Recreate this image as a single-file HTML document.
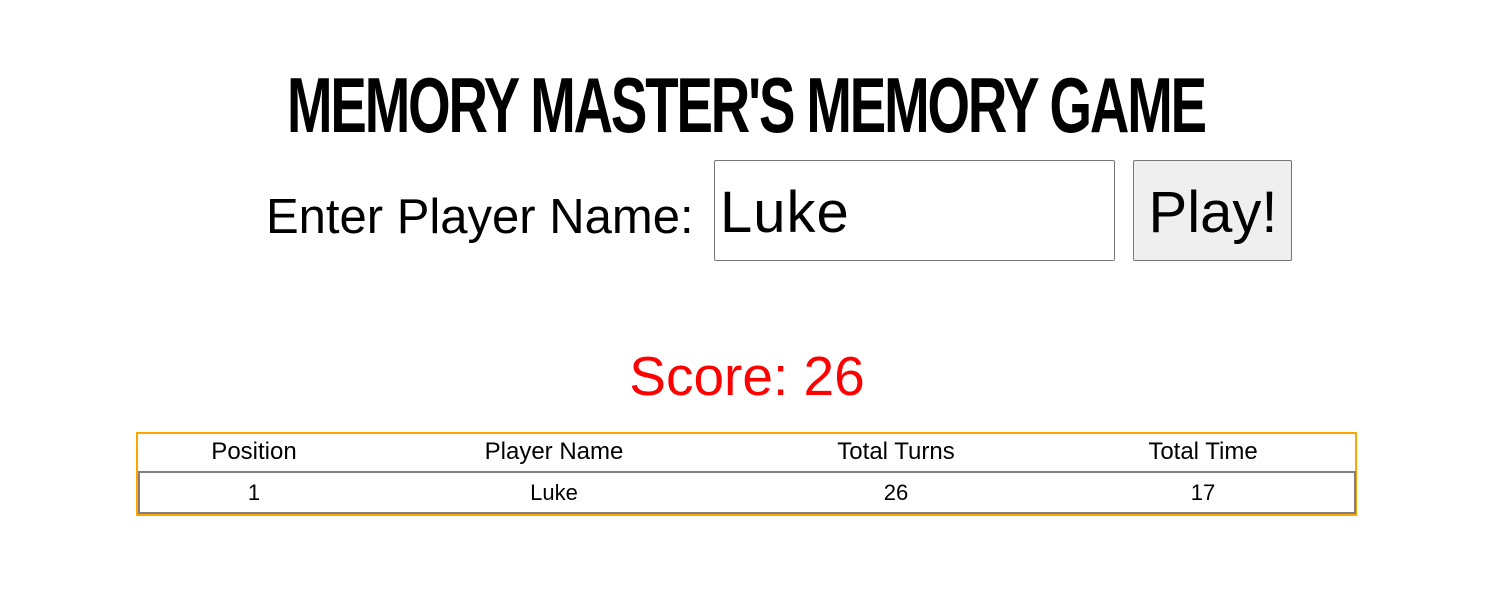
<!DOCTYPE html>
<html><head><meta charset="utf-8"><style>
body{margin:0;width:1494px;height:594px;background:#fff;position:relative;overflow:hidden;font-family:"Liberation Sans",sans-serif;color:#000}
.a{position:absolute;white-space:nowrap}
.c{position:absolute;white-space:nowrap;transform:translateX(-50%)}
h1{margin:0;position:absolute;left:746px;top:66px;transform:translateX(-50%) scaleX(0.70);font-family:"Liberation Sans Narrow","Liberation Sans",sans-serif;font-weight:bold;font-size:78px;line-height:78px;letter-spacing:-3px;white-space:nowrap}
.box{position:absolute;box-sizing:border-box}
</style></head><body>
<h1>MEMORY MASTER'S MEMORY GAME</h1>
<div class="a" style="left:266px;top:187px;font-size:49px;line-height:60px;font-weight:300">Enter Player Name:</div>
<div class="box" style="left:714px;top:160px;width:401px;height:101px;border:1px solid #767676;border-radius:2px"></div>
<div class="a" style="left:720px;top:180px;font-size:58px;line-height:66px;letter-spacing:1px">Luke</div>
<div class="box" style="left:1133px;top:160px;width:159px;height:101px;border:1px solid #767676;border-radius:2px;background:#efefef"></div>
<div class="c" style="left:1213px;top:180px;font-size:58px;line-height:66px">Play!</div>
<div class="c" style="left:747px;top:344px;font-size:55px;line-height:64px;color:#f00">Score: 26</div>
<div class="box" style="left:136px;top:432px;width:1221px;height:84px;border:2px solid #ffa500"></div>
<div class="box" style="left:138px;top:471px;width:1218px;height:43px;border:2px solid #808080"></div>
<div class="c" style="left:254px;top:438px;font-size:24px;line-height:28px">Position</div>
<div class="c" style="left:554px;top:438px;font-size:24px;line-height:28px">Player Name</div>
<div class="c" style="left:896px;top:438px;font-size:24px;line-height:28px">Total Turns</div>
<div class="c" style="left:1203px;top:438px;font-size:24px;line-height:28px">Total Time</div>
<div class="c" style="left:254px;top:479px;font-size:22px;line-height:28px">1</div>
<div class="c" style="left:554px;top:479px;font-size:22px;line-height:28px">Luke</div>
<div class="c" style="left:896px;top:479px;font-size:22px;line-height:28px">26</div>
<div class="c" style="left:1203px;top:479px;font-size:22px;line-height:28px">17</div>
</body></html>
